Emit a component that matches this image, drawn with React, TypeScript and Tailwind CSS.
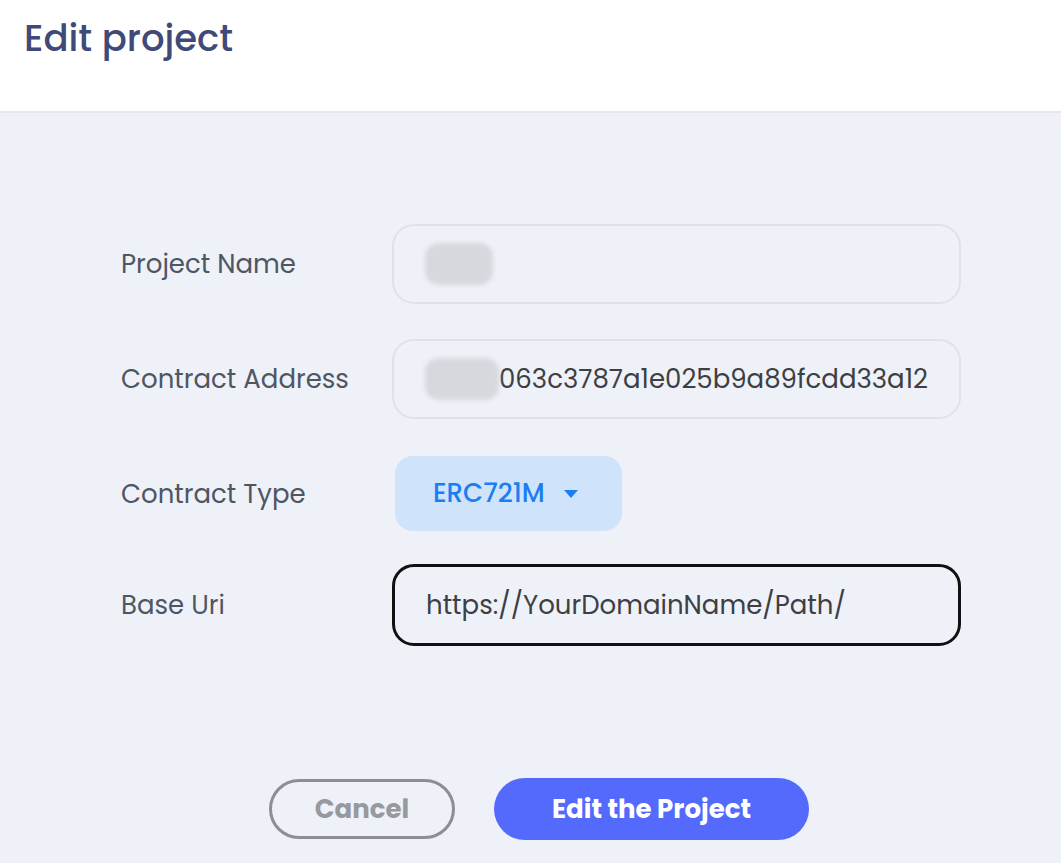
import React from "react";

const font = { fontFamily: "Poppins, Inter, 'Noto Sans', sans-serif" };

function Blob({ w }: { w: number }) {
  return (
    <div className="relative h-[42px] flex items-center" style={{ width: w }}>
      <div className="absolute inset-0 rounded-[14px] bg-[#d6d8de] blur-[2px]" />
    </div>
  );
}

export default function App() {
  return (
    <div className="w-[1061px] h-[863px] bg-[#eef1f8] overflow-hidden" style={font}>
      <header className="h-[113px] bg-white border-b-2 border-[#e8e4f4] px-6 pt-[13px]">
        <h1 className="text-[37px] font-medium text-[#3f4a78] leading-[50px]">Edit project</h1>
      </header>
      <div className="pl-[121px] pt-[111px] w-[961px]">
        <div className="grid grid-cols-[271px_569px] gap-y-[35px] items-center">
          <label className="text-[26px] text-[#4e5663]">Project Name</label>
          <div className="h-[80px] rounded-[22px] border-2 border-[#e0e2e7] flex items-center px-[31px]">
            <Blob w={68} />
          </div>
          <label className="text-[26px] text-[#4e5663]">Contract Address</label>
          <div className="h-[80px] rounded-[22px] border-2 border-[#e0e2e7] flex items-center pl-[31px] text-[26px] text-[#3d3f44]">
            <Blob w={74} />
            <span>063c3787a1e025b9a89fcdd33a12</span>
          </div>
          <label className="text-[26px] text-[#4e5663] mt-[3px]">Contract Type</label>
          <div className="pt-[2px]">
            <button className="ml-[3px] h-[75px] w-[227px] rounded-[18px] bg-[#cfe3fb] flex items-center pl-[38px] gap-[18px] text-[26px] font-medium text-[#1b7ef2]">
              ERC721M
              <svg width="16" height="10" viewBox="0 0 16 10"><path d="M1 1h14L8 9z" fill="#1b7ef2" /></svg>
            </button>
          </div>
          <label className="text-[26px] text-[#4e5663] -mt-[2px]">Base Uri</label>
          <div className="h-[82px] -mt-[2px] rounded-[22px] border-[3px] border-[#111] flex items-center px-[31px] text-[26px] text-[#3d3f44]">
            https://YourDomainName/Path/
          </div>
        </div>
        <div className="flex justify-center gap-[39px] mt-[133px] pr-[4px]">
          <button className="w-[186px] h-[60px] rounded-full border-[3px] border-[#8b8f94] text-[26px] font-bold text-[#96999e]">
            Cancel
          </button>
          <button className="w-[315px] h-[62px] -mt-[1px] rounded-full bg-[#536afd] text-[26px] font-bold text-white">
            Edit the Project
          </button>
        </div>
      </div>
    </div>
  );
}
